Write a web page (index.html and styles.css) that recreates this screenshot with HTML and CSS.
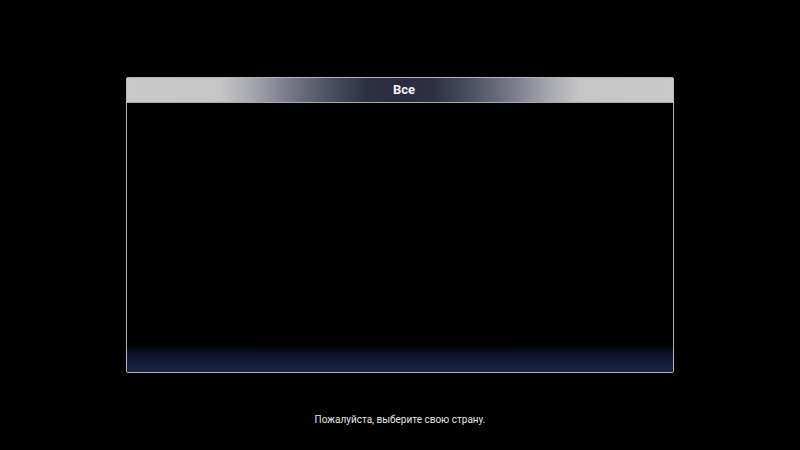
FILE: index.html
```html
<!DOCTYPE html>
<html lang="ru">
<head>
<meta charset="utf-8">
<link rel="stylesheet" href="styles.css">
</head>
<body>
<div class="screen">
  <div class="panel">
    <div class="panel-header">Все</div>
    <div class="panel-body"></div>
  </div>
  <p class="hint">Пожалуйста, выберите свою страну.</p>
</div>
</body>
</html>
```
FILE: styles.css
```css
html, body {
  margin: 0;
  padding: 0;
  background: #000;
  width: 800px;
  height: 450px;
  overflow: hidden;
}
.screen {
  display: flex;
  flex-direction: column;
  align-items: center;
  padding-top: 77px;
  font-family: Roboto, "Noto Sans", sans-serif;
}
.panel {
  width: 546px;
  height: 294px;
  border: 1px solid #b4b6bc;
  border-radius: 2px;
  display: flex;
  flex-direction: column;
  background: #000;
}
.panel-header {
  height: 24px;
  border-bottom: 1px solid #a8aab0;
  background: linear-gradient(to right,
    #c9c9c9 0%, #c6c6c7 17%, #a5a6ac 23%, #7c7d8a 29%, #4c5062 37%, #2c3042 44%,
    #282c3c 50%, #2c3042 56%, #4c5062 63%, #7c7d8a 71%, #a5a6ac 77%, #c6c6c7 83%, #c9c9c9 100%);
  color: #f4f4f6;
  font-weight: 700;
  font-size: 13px;
  line-height: 24px;
  text-align: center;
  padding-left: 8px;
}
.panel-body {
  flex: 1;
  background: linear-gradient(to bottom, #000 0%, #000 90%, #0e1630 94%, #1a2548 100%);
}
.hint {
  margin: 41px 0 0;
  color: #e6e6e6;
  font-size: 10px;
  text-align: center;
}
```
